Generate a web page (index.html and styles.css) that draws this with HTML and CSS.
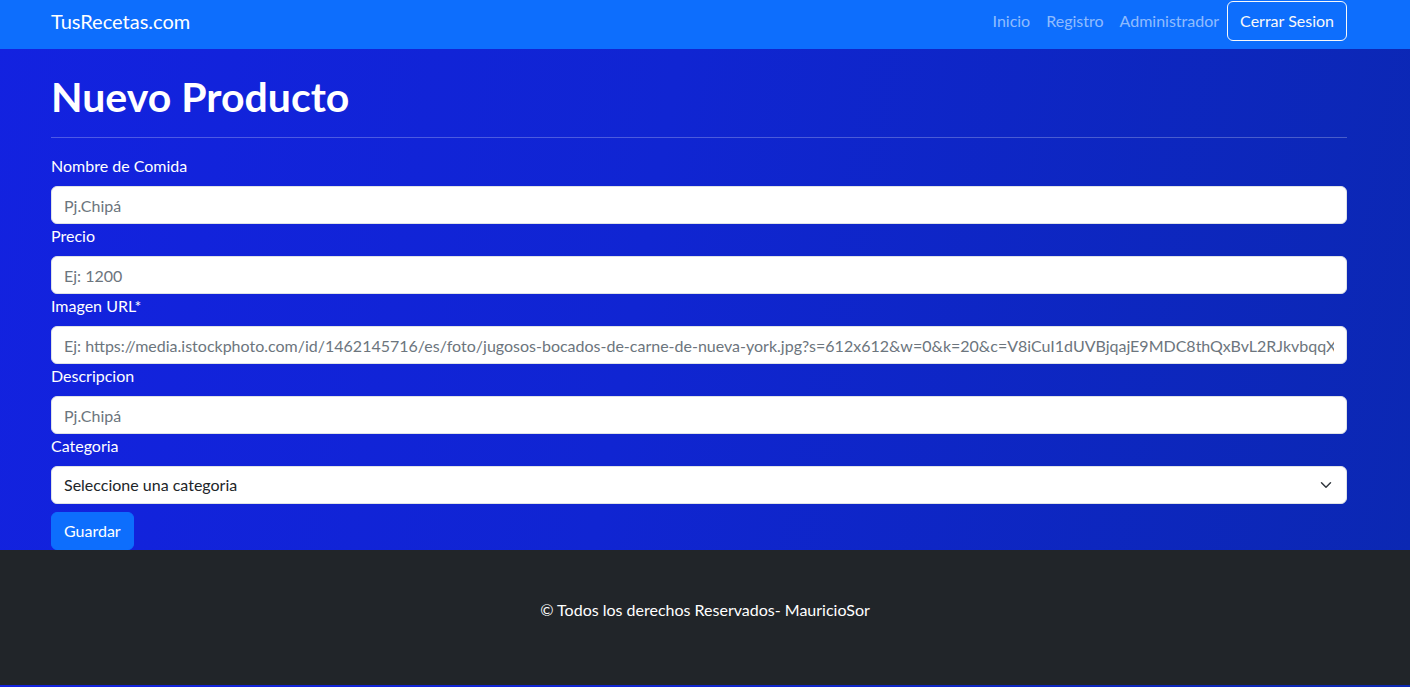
FILE: index.html
```html
<!DOCTYPE html>
<html lang="es">
<head>
<meta charset="utf-8">
<title>Nuevo Producto</title>
<link rel="stylesheet" href="styles.css">
</head>
<body>
<nav class="navbar">
  <div class="wrap nav-inner">
    <a class="brand" href="#">TusRecetas.com</a>
    <div class="nav-links">
      <a class="nav-link" href="#">Inicio</a>
      <a class="nav-link" href="#">Registro</a>
      <a class="nav-link" href="#">Administrador</a>
      <button class="btn-outline" type="button">Cerrar Sesion</button>
    </div>
  </div>
</nav>
<main class="wrap main">
  <h1 class="title">Nuevo Producto</h1>
  <hr class="divider">
  <form class="form">
    <label class="form-label">Nombre de Comida</label>
    <input class="form-control" type="text" placeholder="Pj.Chipá">
    <label class="form-label">Precio</label>
    <input class="form-control" type="text" placeholder="Ej: 1200">
    <label class="form-label">Imagen URL*</label>
    <input class="form-control" type="text" placeholder="Ej: https://media.istockphoto.com/id/1462145716/es/foto/jugosos-bocados-de-carne-de-nueva-york.jpg?s=612x612&amp;w=0&amp;k=20&amp;c=V8iCuI1dUVBjqajE9MDC8thQxBvL2RJkvbqqXLc=">
    <label class="form-label">Descripcion</label>
    <input class="form-control" type="text" placeholder="Pj.Chipá">
    <label class="form-label">Categoria</label>
    <select class="form-select">
      <option>Seleccione una categoria</option>
    </select>
    <div class="actions">
      <button class="btn-primary" type="button">Guardar</button>
    </div>
  </form>
</main>
<footer class="footer">
  <p class="footer-text">© Todos los derechos Reservados- MauricioSor</p>
</footer>
</body>
</html>
```
FILE: styles.css
```css
* { box-sizing: border-box; }
html, body { margin: 0; padding: 0; }
body {
  font-family: Lato, "Liberation Sans", sans-serif;
  font-size: 16px;
  line-height: 1.5;
  color: #fff;
  background: linear-gradient(100deg, #1322e0 0%, #1025d2 45%, #0b28b2 100%);
}
.wrap {
  padding-left: 51px;
  padding-right: 63px;
}
.navbar {
  background: #0d6efd;
  height: 49px;
  padding-top: 1px;
}
.nav-inner {
  display: flex;
  align-items: center;
  justify-content: space-between;
  height: 40px;
}
.brand {
  color: #fff;
  text-decoration: none;
  font-size: 20px;
  line-height: 30px;
}
.nav-links {
  display: flex;
  align-items: center;
}
.nav-link {
  color: rgba(255,255,255,.55);
  text-decoration: none;
  padding: 0 8px;
  line-height: 24px;
}
.btn-outline {
  font-family: inherit;
  font-size: 16px;
  line-height: 24px;
  color: #f8f9fa;
  background: transparent;
  border: 1px solid #f8f9fa;
  border-radius: 6px;
  padding: 7px 12px;
  height: 40px;
}
.main {
  padding-top: 24px;
}
.title {
  margin: 0 0 8px;
  font-size: 41px;
  line-height: 48px;
  font-weight: 700;
}
.divider {
  margin: 16px 0;
  border: 0;
  border-top: 1px solid rgba(255,255,255,.25);
  height: 0;
}
.form {
  display: flex;
  flex-direction: column;
}
.form-label {
  display: block;
  margin-bottom: 8px;
  line-height: 24px;
}
.form-control, .form-select {
  display: block;
  width: 100%;
  height: 38px;
  font-family: inherit;
  font-size: 16px;
  line-height: 24px;
  color: #212529;
  background-color: #fff;
  border: 1px solid #dee2e6;
  border-radius: 6px;
  padding: 6px 12px;
  outline: none;
}
.form-control::placeholder { color: #6c757d; opacity: 1; }
.form-select {
  appearance: none;
  -webkit-appearance: none;
  padding-right: 36px;
  background-image: url("data:image/svg+xml,%3csvg xmlns='http://www.w3.org/2000/svg' viewBox='0 0 16 16'%3e%3cpath fill='none' stroke='%23343a40' stroke-linecap='round' stroke-linejoin='round' stroke-width='2' d='m2 5 6 6 6-6'/%3e%3c/svg%3e");
  background-repeat: no-repeat;
  background-position: right 12px center;
  background-size: 16px 12px;
}
.actions {
  padding-top: 8px;
}
.btn-primary {
  font-family: inherit;
  font-size: 16px;
  line-height: 24px;
  color: #fff;
  background: #0d6efd;
  border: 1px solid #0d6efd;
  border-radius: 6px;
  padding: 6px 12px;
  height: 38px;
}
.footer {
  background: #212529;
  padding: 48px 0 47px;
  margin-bottom: 2px;
  text-align: center;
}
.footer-text {
  margin: 0 0 16px;
  line-height: 24px;
}
```
